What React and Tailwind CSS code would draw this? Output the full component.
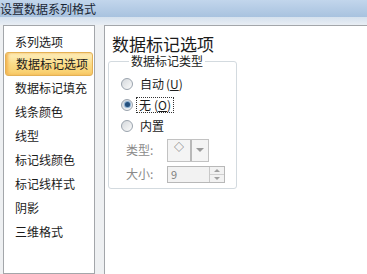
import React from 'react';

const navItems = ['系列选项', '数据标记选项', '数据标记填充', '线条颜色', '线型', '标记线颜色', '标记线样式', '阴影', '三维格式'];

const Radio = ({ checked }) => (
  <span className="w-[12px] h-[12px] rounded-full border border-[#9aa3ad] bg-gradient-to-br from-[#d4d8dc] to-[#fbfbfb] flex items-center justify-center shrink-0">
    {checked && <span className="w-[5px] h-[5px] rounded-full bg-[#244f7c] shadow-[0_0_1px_1px_#7fa6cc]" />}
  </span>
);

const App = () => {
  return (
    <div className="w-[367px] h-[274px] overflow-hidden bg-[#eef0f2] flex flex-col text-[#1b1b1b] font-['Noto_Sans_CJK_SC',sans-serif]">
      <div className="h-[17px] shrink-0 bg-gradient-to-b from-[#c2d6ec] to-[#a8c2df] text-[12px] leading-[17px] text-[#1a2533]">
        设置数据系列格式
      </div>
      <div className="h-[8px] shrink-0 bg-gradient-to-b from-[#d5e1ee] to-[#e9eef4]" />
      <div className="flex flex-1 min-h-0">
        <div className="ml-[3px] w-[92px] shrink-0 bg-white border border-[#a3a6aa] pt-[5px] text-[12px]">
          {navItems.map((item, i) => (
            <div
              key={item}
              className={
                i === 0
                  ? 'h-[21px] leading-[21px] pl-[11px]'
                  : i === 1
                  ? 'h-[24px] leading-[22px] pl-[10px] mx-[1px] rounded-[3px] border border-[#e3b155] bg-gradient-to-b from-[#fdf0bf] via-[#fbdc88] to-[#f8cd6a] shadow-[inset_2px_0_3px_#f3b352]'
                  : 'h-[24px] leading-[24px] pl-[11px]'
              }
            >
              {item}
            </div>
          ))}
        </div>
        <div className="ml-[9px] flex-1 bg-white border-l border-t border-[#a3a6aa] pl-[3px]">
          <div className="text-[17px] leading-[18px] mt-[9px] ml-[4px] text-[#1b1b1b]">数据标记选项</div>
          <fieldset className="mt-[1px] w-[129px] h-[135px] border border-[#d3dadf] rounded-[3px] pl-[12px] text-[12px]">
            <legend className="ml-[8px] px-[2px] leading-[14px]">数据标记类型</legend>
            <div className="flex items-center gap-[7px] h-[20px] mt-[6px]">
              <Radio />
              <span>自动<span className="ml-[2px]">(<span className="underline">U</span>)</span></span>
            </div>
            <div className="flex items-center gap-[7px] h-[21px]">
              <Radio checked />
              <span className="border border-dotted border-[#333] px-[2px] leading-[14px] ml-[-4px]">
                无<span className="ml-[3px]">(<span className="underline">O</span>)</span>
              </span>
            </div>
            <div className="flex items-center gap-[7px] h-[22px]">
              <Radio />
              <span>内置</span>
            </div>
            <div className="flex items-center h-[24px] mt-[1px] pl-[5px] text-[#8a8a8a]">
              <span className="w-[41px]">类型:</span>
              <div className="flex h-[23px] w-[42px] border border-[#c2c2c2] bg-[#f4f4f4]">
                <span className="w-[22px] text-[10px] leading-[14px] text-center text-[#555]">◇</span>
                <span className="flex-1 border-l-2 border-[#b8b8b8] flex items-center justify-center">
                  <span className="w-0 h-0 border-l-[4px] border-r-[4px] border-t-[4px] border-l-transparent border-r-transparent border-t-[#9a9a9a]" />
                </span>
              </div>
            </div>
            <div className="flex items-center h-[18px] mt-[3px] pl-[5px] text-[#8a8a8a]">
              <span className="w-[41px]">大小:</span>
              <div className="flex h-[17px] w-[58px] border border-[#b8b8b8] bg-[#f2f2f2]">
                <span className="flex-1 pl-[3px] text-[11px] leading-[15px] text-[#808080]">9</span>
                <span className="w-[15px] flex flex-col border-l border-[#c8c8c8]">
                  <span className="flex-1 flex items-center justify-center border-b border-[#d0d0d0]">
                    <span className="w-0 h-0 border-l-[3px] border-r-[3px] border-b-[3px] border-l-transparent border-r-transparent border-b-[#a0a0a0]" />
                  </span>
                  <span className="flex-1 flex items-center justify-center">
                    <span className="w-0 h-0 border-l-[3px] border-r-[3px] border-t-[3px] border-l-transparent border-r-transparent border-t-[#a0a0a0]" />
                  </span>
                </span>
              </div>
            </div>
          </fieldset>
        </div>
      </div>
    </div>
  );
};

export default App;
